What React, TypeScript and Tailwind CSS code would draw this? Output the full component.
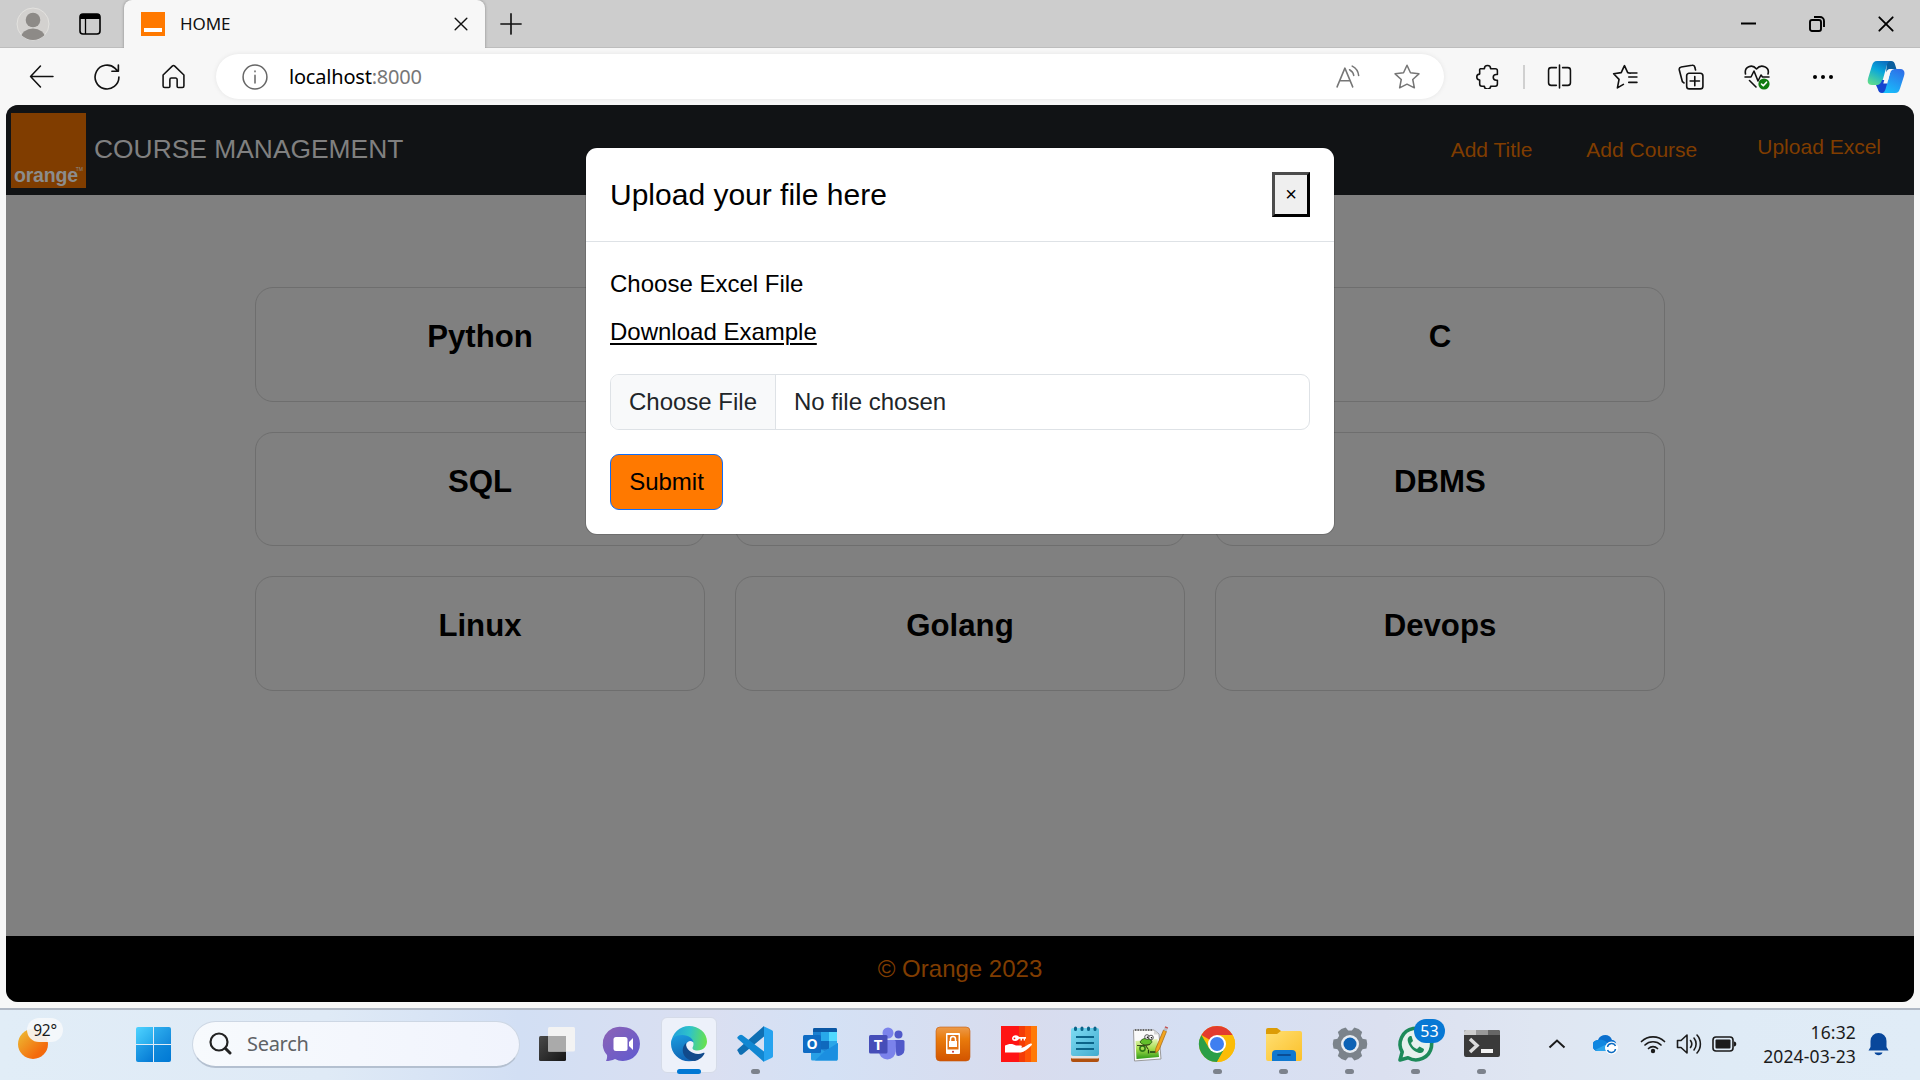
import React from "react";

type P = { d: string; w?: number; s?: number; c?: string };
const Line = ({ d, w = 24, s = 1.5, c = "#111" }: P) => (
  <svg width={w} height={w} viewBox="0 0 24 24" fill="none" stroke={c} strokeWidth={s} strokeLinecap="round" strokeLinejoin="round" className="shrink-0">
    <path d={d} />
  </svg>
);

const STAR = "M12 1.2l3.2 6.9 7.8 1-5.7 5.2 1.5 7.7L12 18.6l-6.8 3.4 1.5-7.7L1 9.100l7.800-1z";

const Cell = ({ children }: { children: React.ReactNode }) => (
  <div className="flex w-[66px] shrink-0 items-center justify-center">{children}</div>
);

function TabBar() {
  return (
    <div className="flex h-12 items-stretch bg-[#cdcdcd] shadow-[inset_0_-1px_0_#bdbdbd]">
      <div className="flex w-[124px] shrink-0 items-center pl-4">
        <svg width="34" height="34" viewBox="0 0 34 34" className="shrink-0">
          <defs><clipPath id="av"><circle cx="17" cy="17" r="16" /></clipPath></defs>
          <circle cx="17" cy="17" r="16" fill="#d3d1cf" stroke="#e3e2df" />
          <g clipPath="url(#av)" fill="#8d8a87"><circle cx="17" cy="13" r="7.300" /><ellipse cx="17" cy="31" rx="12" ry="9.500" /></g>
        </svg>
        <svg width="22" height="22" viewBox="0 0 22 22" className="ml-[29px] shrink-0">
          <rect x="1" y="1" width="20" height="20" rx="3" fill="none" stroke="#000" strokeWidth="1.600" />
          <path d="M1 6V4a3 3 0 0 1 3-3h14a3 3 0 0 1 3 3v2z" />
          <path d="M6.500 6v15" stroke="#000" strokeWidth="1.300" />
        </svg>
      </div>
      <div className="flex w-[361px] shrink-0 items-center rounded-t-lg bg-[#f7f7f7] pl-[17px] pr-[17px] shadow-[0_0_3px_rgba(0,0,0,0.35)] [clip-path:inset(0_-4px_0_-4px)]">
        <div className="flex size-6 shrink-0 items-end justify-center bg-[#ff7900] pb-1"><div className="h-1 w-[18px] bg-white" /></div>
        <span className="ml-[15px] font-['Noto_Sans'] text-[17px] tracking-[-0.1px] text-[#111]">HOME</span>
        <div className="ml-auto flex"><Line w={14} s={2.400} d="M2 2l20 20M22 2L2 22" /></div>
      </div>
      <div className="ml-[15px] flex items-center"><Line w={22} s={1.800} d="M12 1v22M1 12h22" /></div>
      <div className="ml-auto flex items-center gap-[53px] pr-[26px]">
        <svg width="15" height="16"><path d="M0 7.500h15" stroke="#000" strokeWidth="2" /></svg>
        <svg width="16" height="16" viewBox="0 0 16 16" fill="none" stroke="#000" strokeWidth="1.900"><rect x="1" y="4" width="11" height="11" rx="2" /><path d="M5 1h6a4 4 0 0 1 4 4v6" /></svg>
        <Line w={16} s={2.800} c="#000" d="M2 2l20 20M22 2L2 22" />
      </div>
    </div>
  );
}

function ToolBar() {
  return (
    <div className="flex h-[57px] items-center bg-[#f7f7f7] pl-[8px]">
      <Cell><Line w={25} d="M23 12H1.500M11 2L1.500 12 11 22" /></Cell>
      <Cell><Line w={26} d="M23 12A11 11 0 1 1 19.500 4l2.500 2.700M22.500 1v5.700h-6" /></Cell>
      <Cell><Line w={25} d="M2 10.500L10.800 2a1.800 1.800 0 0 1 2.400 0L22 10.500V21a1.500 1.500 0 0 1-1.500 1.500h-4A1 1 0 0 1 15.500 21.500V15a1.500 1.500 0 0 0-1.500-1.500h-4A1.500 1.500 0 0 0 8.500 15v6.500a1 1 0 0 1-1 1h-4A1.500 1.500 0 0 1 2 21z" /></Cell>
      <div className="ml-[10px] flex h-[45px] w-[1228px] shrink-0 items-center rounded-full bg-white pl-[26px] pr-[24px] shadow-[0_0_5px_rgba(0,0,0,0.08)]">
        <Line w={26} s={1.400} c="#666" d="M12 1a11 11 0 1 0 0 22a11 11 0 1 0 0-22M12 10.500v7M12 6.500v.600" />
        <span className="ml-[21px] font-['Noto_Sans'] text-[20px] tracking-[-0.2px] text-black">localhost<span className="text-[#777]">:8000</span></span>
        <div className="ml-auto flex items-center gap-[34px]">
          <Line w={25} s={1.500} c="#767676" d="M2 22L9.500 4 17 22M4.600 16h9.800M14 5.500c2.200 1.200 3.500 3 4 5.500M16.500 2c3.600 1.800 5.800 5 6.200 9" />
          <Line w={26} s={1.400} c="#767676" d={STAR} />
        </div>
      </div>
      <div className="ml-[10px] flex w-[66px] shrink-0 justify-center">
        <Line w={25} d="M5 4.500h4a3 3 0 0 1 6 0h4.500a2 2 0 0 1 2 2V10h-1.200a2.800 2.800 0 0 0 0 5.600h1.200v3.700a2 2 0 0 1-2 2H15a3 2.700 0 0 1-6 0H6.500a2 2 0 0 1-2-2v-4a2.800 2.800 0 0 1 0-5.600V6.500a2 2 0 0 1 .5-2z" />
      </div>
      <div className="ml-[3px] mr-[1px] h-6 w-[2px] shrink-0 bg-[#d0d0d0]" />
      <Cell><Line w={25} d="M9 3.500H4a2.500 2.500 0 0 0-2.500 2.500v12A2.500 2.500 0 0 0 4 20.500h5M12 1v22M15 3.500h5a2.500 2.500 0 0 1 2.500 2.500v12a2.500 2.500 0 0 1-2.500 2.500h-5" /></Cell>
      <Cell><Line w={26} d="M17 8.500l-2.500-.500L11.500 1.500 8.500 8 1.500 9l5 5.200L5 22l5.500-3.200M15.500 12H23M15.500 17H23M15.500 8.300H23" /></Cell>
      <Cell><Line w={26} d="M10 8.500h10.500A2.500 2.500 0 0 1 23 11v9.500a2.500 2.500 0 0 1-2.500 2.500H10.500A2.500 2.500 0 0 1 8 20.500V11a2.500 2.500 0 0 1 2-2.500M15.500 11.500v8.500M11.200 15.700h8.600M5.500 17.500L4 16.200 1.200 5.500A2.300 2.300 0 0 1 3 2.800L13 1.200A2 2 0 0 1 15.500 3l.7 2.500" /></Cell>
      <Cell>
        <svg width="26" height="27" viewBox="0 0 26 27" fill="none" stroke="#111" strokeWidth="1.600" strokeLinejoin="round" strokeLinecap="round">
          <path d="M1.500 11C0 4 8 .500 12.500 6 17 .500 26 4 24 11M1 14h6l3-6 4 10 3-6 1.500 2H25M5.500 17.500l6.500 6.500" />
          <circle cx="20" cy="21" r="5.600" fill="#107c10" stroke="none" /><path d="M17.500 21l1.800 1.800 3.200-3.600" stroke="#fff" />
        </svg>
      </Cell>
      <Cell>
        <svg width="22" height="6"><circle cx="3" cy="3" r="2" /><circle cx="11" cy="3" r="2" /><circle cx="19" cy="3" r="2" /></svg>
      </Cell>
      <div className="flex w-[60px] shrink-0 items-center justify-center">
        <svg width="38" height="34" viewBox="0 0 38 34">
          <defs>
            <linearGradient id="c1" x1="0.700" y1="0" x2="0.200" y2="1"><stop offset="0" stopColor="#0c6fc0" /><stop offset=".4" stopColor="#08a6dc" /><stop offset="1" stopColor="#5fdc8c" /></linearGradient>
            <linearGradient id="c2" x1="0.800" y1="0" x2="0.300" y2="1"><stop offset="0" stopColor="#2e6fe8" /><stop offset="1" stopColor="#18bdfb" /></linearGradient>
          </defs>
          <path d="M20 1h4c2.500 0 3.500 1.500 4.200 4l1.200 4h-6c-3 0-3.600 2-4.300 4z" fill="#0b5f9e" />
          <path d="M10 1h14c-2.500 0-3.500 2-4.200 4.500L16 19c-1 4-2.500 6-6 6H5c-4 0-5-3-3.800-7L5 5.500C6 2.500 7 1 10 1z" fill="url(#c1)" />
          <path d="M9 25c3.500 0 5-1.500 6-5h8l-4 13h-4c-2.500 0-3.500-1.500-4.200-4z" fill="#1544cf" />
          <path d="M28 33H14.500c2.500 0 3.500-2 4.200-4.500L22.500 15c1-4 2.500-6 6-6h4.700c4 0 5 3 3.800 7l-4 12.500C32 31.500 31 33 28 33z" fill="url(#c2)" />
          <path d="M19.500 12h3.800l-3 11.500h-4z" fill="#f7f7f7" />
        </svg>
      </div>
    </div>
  );
}

function NavBar() {
  return (
    <div className="flex h-[90px] shrink-0 bg-[#111315] pl-[5px] text-[#803d00]">
      <div className="mt-2 flex h-[75px] w-[75px] items-end justify-between bg-[#803d00] px-[3px] pb-[3px] leading-none text-[#8c8c8c]">
        <span className="text-[19.5px] font-bold leading-[20px] tracking-[-0.2px]">orange</span>
        <span className="-ml-1 mb-[13px] text-[5px]">TM</span>
      </div>
      <span className="ml-[8px] mt-[28px] text-[26.400px] leading-[32px] text-[#808080]">COURSE MANAGEMENT</span>
      <div className="ml-auto flex pr-[33px] text-[21px] leading-[24px]">
        <span className="mt-[33px]">Add Title</span>
        <span className="ml-[54px] mt-[33px]">Add Course</span>
        <span className="ml-[60px] mt-[30px]">Upload Excel</span>
      </div>
    </div>
  );
}

const COURSES = ["Python", "Java", "C", "SQL", "HTML", "DBMS", "Linux", "Golang", "Devops"];

function Modal() {
  return (
    <div className="absolute left-[580px] top-[43px] flex h-[386px] w-[748px] flex-col rounded-[11px] bg-white text-[24px] leading-[36px] text-[#111] shadow-[0_0_0_1px_rgba(0,0,0,0.14)]">
      <div className="flex h-[94px] shrink-0 items-center justify-between border-b border-[#dee2e6] px-6">
        <span className="text-[30px] text-black">Upload your file here</span>
        <button className="flex h-[45px] w-[38px] items-center justify-center border-[3px] border-b-black border-l-[#4c4c4c] border-r-black border-t-[#4c4c4c] bg-[#efefef] pb-[2px] text-[20px] text-black">×</button>
      </div>
      <div className="flex flex-col items-start px-6 pt-6">
        <span className="text-black">Choose Excel File</span>
        <a className="mt-3 text-black underline decoration-2 underline-offset-[3px]">Download Example</a>
        <div className="mt-6 flex h-14 w-full overflow-hidden rounded-[9px] border border-[#dee2e6] text-[#212529]">
          <span className="flex w-[165px] items-center justify-center border-r border-[#dee2e6] bg-[#f8f9fa]">Choose File</span>
          <span className="flex items-center pl-[18px]">No file chosen</span>
        </div>
        <button className="mt-6 flex h-14 w-[113px] items-center justify-center rounded-[9px] border border-[#0d6efd] bg-[#ff7900] text-black">Submit</button>
      </div>
    </div>
  );
}

function Page() {
  return (
    <div className="relative mx-[6px] flex h-[897px] flex-col overflow-hidden rounded-[12px] bg-[#808080] font-['Liberation_Sans',Arial,sans-serif]">
      <NavBar />
      <div className="grid flex-1 grid-cols-3 content-start gap-x-[30px] gap-y-[30px] px-[249px] pt-[92px]">
        {COURSES.map((c) => (
          <div key={c} className="flex h-[114.500px] justify-center rounded-[18px] border border-[#6e6e6e] pt-[31px] text-[31.200px] font-bold leading-[36px] text-black">{c}</div>
        ))}
      </div>
      <div className="flex h-[66px] shrink-0 items-center justify-center bg-black text-[24px] text-[#803d00]">© Orange 2023</div>
      <Modal />
    </div>
  );
}

const I = ({ children }: { children: React.ReactNode }) => (
  <svg width="36" height="36" viewBox="0 0 36 36" className="shrink-0 overflow-visible">{children}</svg>
);

const G = ({ id, a, b }: { id: string; a: string; b: string }) => (
  <linearGradient id={id} x1="0" y1="0" x2="1" y2="1"><stop offset="0" stopColor={a} /><stop offset="1" stopColor={b} /></linearGradient>
);

const txt = { fontFamily: "Open Sans, sans-serif", fontWeight: 700, fill: "#fff" };

const APPS: { run?: boolean; active?: boolean; icon: React.ReactNode }[] = [
  { icon: <I><defs><G id="tv" a="#4a4a4a" b="#161616" /></defs><rect x="0" y="10" width="27" height="25" rx="1.500" fill="url(#tv)" /><rect x="9" y="1" width="27" height="24.500" rx="1.500" fill="#f3f3f3" /><rect x="9" y="10" width="18" height="15.500" fill="#aaa" /></I> },
  { icon: <I><defs><G id="ch" a="#8d63b5" b="#5f5ad0" /></defs><path d="M18 1a17 17 0 1 1-8 32c-3 1.500-6 2-9 2 1-2 1.300-4 1-6A17 17 0 0 1 18 1z" fill="url(#ch)" /><rect x="8.500" y="11" width="14" height="14" rx="2.500" fill="#fff" /><path d="M24 16l4-4v12l-4-4z" fill="#fff" /></I> },
  { active: true, icon: <I>
    <defs>
      <linearGradient id="e1" x1="0" y1=".4" x2="1" y2=".5"><stop offset="0" stopColor="#209fdc" /><stop offset=".5" stopColor="#2fc3c9" /><stop offset="1" stopColor="#68e24c" /></linearGradient>
      <linearGradient id="e2" x1="0" y1="0" x2=".3" y2="1"><stop offset="0" stopColor="#1c9ee0" /><stop offset="1" stopColor="#1064b4" /></linearGradient>
    </defs>
    <path d="M0 17C1 7 9 0 18 0c10 0 18 7 18 15.500 0 5-4 9-9.500 9-4 0-5-1.500-5-2.500 0-1 1-1.500 1-4 0-4-3.500-6-7-7z" fill="url(#e1)" />
    <path d="M0 18C0 12 5 9 11 9c7 0 11.500 4 11.500 8 0-2-6-4-7.500 2-2 8 5 14 10 15C12 39 0 29 0 18z" fill="url(#e2)" />
    <path d="M15 17c-6 5-4 17 9 18 4-1 8-4 9.500-7.500.3-1-.5-1-1.500-.5C24 30 14.500 25 15 17z" fill="#114a8b" />
  </I> },
  { run: true, icon: <I>
    <path d="M1 25.500c-1-1-1-1.500 0-2.500L27 0v10.500L5.500 28.200c-1 .8-2 .8-3 0z" fill="#0f6fb3" />
    <path d="M1 13c-1-1-1-1.500 0-2.500l1.500-1.200c1-.8 2-.8 3 0L27 25.500V36z" fill="#1187d2" />
    <path d="M26 0l8.500 4c1 .500 1.500 1 1.500 2v24c0 1-.5 1.500-1.500 2L26 36c.8-.2 1-.8 1-1.500v-33c0-.8-.2-1.300-1-1.500z" fill="#27a3ef" />
  </I> },
  { icon: <I>
    <rect x="10" y="2" width="24" height="24" rx="1.500" fill="#1a7fd0" /><path d="M10 6V3.500A1.500 1.500 0 0 1 11.500 2h21A1.500 1.500 0 0 1 34 3.500V6z" fill="#0b57a4" />
    <path d="M18 6h8v9h-8z" fill="#28a8ea" /><path d="M26 6h8v9h-8z" fill="#50d9ff" /><path d="M26 15h8v8h-8z" fill="#2aa6e8" /><path d="M18 15h8v8h-8z" fill="#0f69bd" />
    <path d="M35 17v16a1.500 1.500 0 0 1-1.500 1.500h-24A1.500 1.500 0 0 1 8 33V20l14 5z" fill="#279fe6" /><path d="M35 17L22 25l-10 9.500h22z" fill="#1b8fe0" />
    <rect x="0" y="9" width="18" height="18" rx="1.500" fill="#0f6cc4" /><text x="9" y="23" textAnchor="middle" fontSize="14" style={txt}>O</text>
  </I> },
  { icon: <I>
    <circle cx="29.500" cy="8.500" r="4" fill="#5059c9" /><path d="M25 14h9a1.500 1.500 0 0 1 1.500 1.500V24a6 6 0 0 1-8 5.500z" fill="#5059c9" />
    <circle cx="19" cy="7" r="5.500" fill="#7b83eb" /><path d="M11 14h14a1.800 1.800 0 0 1 1.800 1.800V25a8.500 8.500 0 0 1-17 0z" fill="#7b83eb" />
    <rect x="0" y="9" width="18.500" height="18.500" rx="1.500" fill="#464eb8" /><text x="9.200" y="23.500" textAnchor="middle" fontSize="15" style={txt}>T</text>
  </I> },
  { icon: <I>
    <defs><linearGradient id="lk" x1="0" y1="0" x2="0" y2="1"><stop offset="0" stopColor="#ec9a4a" /><stop offset=".35" stopColor="#e97b0c" /><stop offset="1" stopColor="#d25400" /></linearGradient></defs>
    <rect x="1" y="1" width="34" height="34" rx="4" fill="url(#lk)" stroke="#c25a10" strokeWidth=".6" />
    <rect x="11" y="7" width="14" height="21" rx="1" fill="#fff" /><rect x="12.500" y="9" width="11" height="14.500" fill="#e27214" />
    <path d="M15.500 15v-2a2.500 2.500 0 0 1 5 0v2" stroke="#fff" strokeWidth="1.500" fill="none" /><rect x="14" y="15" width="8" height="6" fill="#fff" /><circle cx="18" cy="25.700" r="1" fill="#c33" />
  </I> },
  { icon: <I>
    <path d="M0 0h18v36H0z" fill="#ff1414" /><path d="M18 0h6v36h-6z" fill="#f43c06" /><path d="M24 0h6v36h-6z" fill="#ff5505" /><path d="M30 0h6v36h-6z" fill="#ff7a08" />
    <path d="M4 19.500c4-2.300 8-2 11 0h4.500c1.800 0 1.800 2.300 0 2.300 4 0 7-3.300 10-4.300 1.800-.5 1.800 1 .8 2-4 4-7 6.500-10.500 7H4z" fill="#fff" />
    <path d="M11 12.500c0-3.500 5.500-4.500 7-1.500h7v1.800h-1v1.700h-1.300v-1.700H21v1.700h-1.500v-1.700H18c-1.500 3-7 3-7-.3z" fill="#fff" /><circle cx="13.500" cy="12.300" r=".9" fill="#ff1414" />
  </I> },
  { icon: <I>
    <defs><G id="np" a="#7ddcf3" b="#43abcf" /></defs>
    <rect x="4" y="29" width="28" height="7" rx="2" fill="#b0500f" /><rect x="4" y="27" width="28" height="5.500" rx="1" fill="#e9e4e0" /><rect x="4" y="2" width="28" height="28" rx="2" fill="url(#np)" />
    <path d="M9 11h18M9 17h18M9 23h18" stroke="#0b6489" strokeWidth="2" /><path d="M8.500 2v1.500M15 2v1.500M21.500 2v1.500M28 2v1.500" stroke="#0b6489" strokeWidth="3" strokeLinecap="round" />
  </I> },
  { icon: <I>
    <defs><linearGradient id="nn" x1="0" y1="0" x2="0" y2="1"><stop offset="0" stopColor="#e4f5b4" /><stop offset=".5" stopColor="#a5dc4c" /><stop offset="1" stopColor="#2d9a16" /></linearGradient></defs>
    <path d="M.5 4H21l5 4 2 25-26.500 2z" fill="#fafafa" stroke="#9a9a9a" /><path d="M21 4v4.500h5z" fill="#d5d5d5" />
    <path d="M2.500 15l22-2 1.500 18-22.500 2z" fill="url(#nn)" />
    <path d="M2 4h18" stroke="#666" strokeWidth="2" strokeDasharray="1.300 1.300" />
    <path d="M7 16c2-4 7-4.500 10-2.500 3 1.500 2 4-1 5-3 .8-7 .5-9-2.500z" fill="#62bf2a" stroke="#2c5a14" strokeWidth=".9" />
    <circle cx="9.500" cy="22.500" r="2.600" fill="none" stroke="#2f7a18" strokeWidth="1.600" /><path d="M4 19.500h8l5-1M13 20l2 3" stroke="#3b4a1a" strokeWidth="1.200" fill="none" />
    <circle cx="14" cy="11" r="2.300" fill="#fff" stroke="#333" strokeWidth=".8" /><circle cx="18" cy="11.500" r="2.300" fill="#fff" stroke="#333" strokeWidth=".8" /><circle cx="14.500" cy="11.300" r=".8" /><circle cx="18.500" cy="11.800" r=".8" />
    <path d="M15.500 23.500v4M17 26h6" stroke="#1d3c10" strokeWidth="1.300" />
    <path d="M30.500 4l3 1.500L26 24l-3.500 3 .3-4.500z" fill="#f2a51f" stroke="#a16512" strokeWidth=".7" /><path d="M30.500 4l1.200-2.500 3 1.200L33.500 5.500z" fill="#b9bcc4" /><path d="M31.700 1.500l.6-1.300 2.800 1.200-.4 1.300z" fill="#c44c4c" />
  </I> },
  { run: true, icon: <I>
    <circle cx="18" cy="18" r="18" fill="#fbbc07" /><path d="M18 18L2.400 9A18 18 0 0 1 33.600 9z" fill="#e33b2e" />
    <path d="M2.400 9a18 18 0 0 0 15.600 27l7.500-13.500L10.200 22.500z" fill="#2a9e47" /><path d="M18 9h15.600A18 18 0 0 1 18 36l7.800-13.500z" fill="#fbbc07" />
    <circle cx="18" cy="18" r="9" fill="#fff" /><circle cx="18" cy="18" r="7" fill="#3f7ff0" />
  </I> },
  { run: true, icon: <I>
    <defs><G id="fo" a="#ffdf72" b="#fbc02a" /></defs>
    <path d="M0 4a2 2 0 0 1 2-2h9l4 3v5H0z" fill="#dc9c06" /><path d="M0 8h11l4-3h19a2 2 0 0 1 2 2v26a2 2 0 0 1-2 2H2a2 2 0 0 1-2-2z" fill="url(#fo)" />
    <path d="M6 35v-7a4 4 0 0 1 4-4h16a4 4 0 0 1 4 4v7z" fill="#1078cf" /><path d="M12 29h12" stroke="#0a4d94" strokeWidth="1.800" strokeLinecap="round" />
  </I> },
  { run: true, icon: <I>
    <g fill="#7b838b"><circle cx="18" cy="18" r="13.500" />
      {[0, 60, 120, 180, 240, 300].map((a) => <path key={a} d="M12.500 7l1-5.500q4.500-1.500 9 0l1 5.500z" transform={`rotate(${a + 30} 18 18)`} />)}
    </g>
    <circle cx="18" cy="18" r="9" fill="#e7ecf2" /><circle cx="18" cy="18" r="6.500" fill="#0c62b5" />
  </I> },
  { run: true, icon: <I>
    <path d="M2 34l2.200-8A15.800 15.800 0 1 1 10 31.800z" fill="#e6f0ee" stroke="#1d8a5a" strokeWidth="3.600" strokeLinejoin="round" />
    <path d="M12 10c-2 1-3 3-2 6 2 6 6 9.500 11 11 3 .5 5-1 5-4l-4.500-2.500-2.500 2.500c-3-1-5-3-6-6l2-2L13.500 10z" fill="#1d8a5a" />
    <rect x="16" y="-7" width="31" height="24" rx="12" fill="#0778d4" /><text x="31.500" y="11" textAnchor="middle" fontSize="16" style={{ fontFamily: "Noto Sans, sans-serif", fill: "#fff" }}>53</text>
  </I> },
  { run: true, icon: <I>
    <rect x="0" y="4" width="36" height="27" rx="2" fill="#3a3a3a" /><path d="M0 9V6a2 2 0 0 1 2-2h10v5z" fill="#ccc" /><path d="M12 4h12v5H12z" fill="#999" /><path d="M24 4h10a2 2 0 0 1 2 2v3H24z" fill="#666" />
    <path d="M6 13l7 6.500L6 26" fill="none" stroke="#ddd" strokeWidth="3.500" /><path d="M17 25h12" stroke="#f2f2f2" strokeWidth="4" />
  </I> },
];

function TaskBar() {
  return (
    <div className="flex h-[72px] items-center border-t-2 border-[#b0b8c4] bg-[linear-gradient(90deg,#e1edf7_0%,#dfeaf6_17%,#d2dff4_27%,#dadff1_37%,#d4e1f5_43%,#d8dcee_53%,#d5dff3_62%,#dbe0f0_72%,#dfe6f2_80%,#dfebf6_90%,#e0ecf7_100%)] pb-[2px] font-['Noto_Sans',sans-serif] text-[#1b1b1b]">
      <div className="relative ml-[18px] size-[30px] shrink-0 rounded-full bg-[linear-gradient(135deg,#ecc136,#f46a0c_75%)]">
        <span className="absolute -top-[11px] left-[9px] flex h-6 w-[36px] items-center justify-center rounded-full bg-[#f6f8fb]/90 pt-px text-[15.500px] tracking-[-0.3px]">92°</span>
      </div>
      <div className="ml-[88px] grid size-[35px] shrink-0 grid-cols-2 gap-px overflow-hidden rounded-[2px]">
        <div className="bg-[linear-gradient(135deg,#4fd2ff,#22a7ea)]" /><div className="bg-[linear-gradient(135deg,#2fb0ef,#1288db)]" />
        <div className="bg-[linear-gradient(135deg,#25a5ea,#0478d4)]" /><div className="bg-[linear-gradient(135deg,#128ddd,#0078d4)]" />
      </div>
      <div className="ml-[21px] flex h-[47px] w-[328px] shrink-0 items-center rounded-full border border-b-2 border-[#cdd7e4] border-b-[#b4c0d0] bg-[linear-gradient(90deg,#f7fafd,#f1f4fd)] pl-4">
        <svg width="23" height="23" viewBox="0 0 23 23" fill="none" stroke="#222" strokeLinecap="round"><circle cx="10" cy="10" r="8.500" strokeWidth="2.200" /><path d="M16.500 16.500l4.500 4.500" strokeWidth="3" /></svg>
        <span className="ml-[15px] text-[20px] tracking-[-0.3px] text-[#5f6266]">Search</span>
      </div>
      <div className="ml-[4px] mt-[2px] flex h-full shrink-0">
        {APPS.map((a, i) => (
          <div key={i} className="relative flex w-[66.050px] items-center justify-center">
            {a.active && <div className="absolute inset-x-[5px] top-[6px] h-[56px] rounded-md border border-[#d5dbe8] bg-[#edf1fa]" />}
            <div className="relative -top-px">{a.icon}</div>
            {a.active && <div className="absolute bottom-[5px] h-[5px] w-6 rounded-full bg-[#0078d4]" />}
            {a.run && <div className="absolute bottom-[5px] h-[5px] w-[9px] rounded-full bg-[#7c828c]" />}
          </div>
        ))}
      </div>
      <div className="ml-auto flex shrink-0 items-center pr-[31px]">
        <svg width="18" height="10" viewBox="0 0 18 10" fill="none" stroke="#1b1b1b" strokeWidth="2"><path d="M1.500 8.500L9 1.500l7.500 7" /></svg>
        <svg width="26" height="22" viewBox="0 0 26 22" className="ml-[27px]">
          <path d="M5 18a5.500 5.500 0 0 1 0-11C7 1 17 0 19 7c4 0 5 4 4 8l-5 3z" fill="#0a6fce" /><path d="M5 7c6-1 9 2 12 6l-4 5H5A5.500 5.500 0 0 1 5 7z" fill="#1187e0" /><path d="M2 17l10-5 6 6H5a5 5 0 0 1-3-1z" fill="#2aa4ec" />
          <circle cx="18.500" cy="15" r="6.500" fill="#fff" /><path d="M14.500 14a4.200 4.200 0 0 1 8-1M22.500 16a4.200 4.200 0 0 1-8 1" fill="none" stroke="#0d6cc2" strokeWidth="1.500" />
        </svg>
        <svg width="26" height="20" viewBox="0 0 26 20" fill="none" stroke="#1b1b1b" strokeWidth="1.700" strokeLinecap="round" className="ml-[21px]"><path d="M1.500 7.500a16.500 16.500 0 0 1 23 0M5 11a11.500 11.500 0 0 1 16 0M8.500 14.500a6.500 6.500 0 0 1 9 0" /><circle cx="13" cy="17" r="2.200" fill="#1b1b1b" stroke="none" /></svg>
        <svg width="26" height="22" viewBox="0 0 26 22" fill="none" stroke="#1b1b1b" strokeWidth="1.600" strokeLinecap="round" strokeLinejoin="round" className="ml-[10px]"><path d="M1.500 7.500H5L11 2v18l-6-5.500H1.500zM14.500 7.500c1.500 2 1.500 5 0 7M18 5c2.800 3.500 2.800 8.500 0 12M21 2c4.500 5 4.500 13 0 18" /></svg>
        <svg width="25" height="16" viewBox="0 0 25 16" className="ml-[10px]"><rect x="1" y="1" width="20" height="14" rx="3" fill="none" stroke="#1b1b1b" strokeWidth="1.600" /><rect x="3.500" y="3.500" width="15" height="9" rx="1" fill="#1b1b1b" /><path d="M22 5.500c3 0 3 5 0 5z" fill="#1b1b1b" /></svg>
        <div className="ml-[24px] flex w-[95px] flex-col items-end whitespace-nowrap text-[17.500px] leading-[24px] tracking-[0.15px]"><span>16:32</span><span>2024-03-23</span></div>
        <svg width="21" height="24" viewBox="0 0 21 24" fill="#08479b" className="ml-[12px]"><path d="M2.500 9a8 8 0 0 1 16 0v6l2 3.500H.500l2-3.500zM6.500 20.500h8c-1 3.500-7 3.500-8 0z" /></svg>
      </div>
    </div>
  );
}

export default function App() {
  return (
    <div className="flex h-[1080px] w-[1920px] flex-col overflow-hidden bg-[#f7f7f7]">
      <TabBar />
      <ToolBar />
      <Page />
      <div className="h-[6px] shrink-0 bg-[#f7f7f7]" />
      <TaskBar />
    </div>
  );
}
